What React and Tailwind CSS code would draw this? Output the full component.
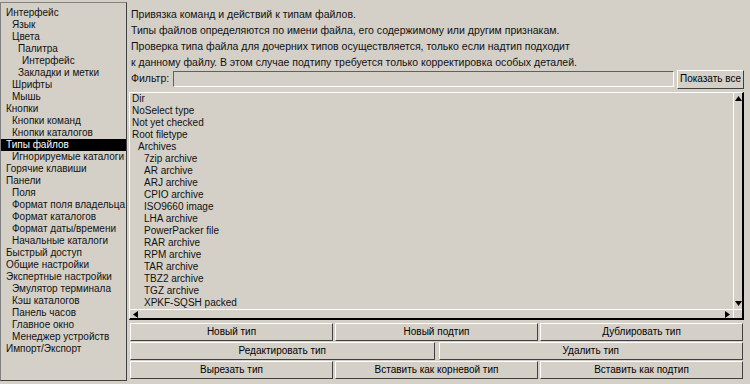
const tree = [
  ["Интерфейс", 0],
  ["Язык", 1],
  ["Цвета", 1],
  ["Палитра", 2],
  ["Интерфейс", 3],
  ["Закладки и метки", 2],
  ["Шрифты", 1],
  ["Мышь", 1],
  ["Кнопки", 0],
  ["Кнопки команд", 1],
  ["Кнопки каталогов", 1],
  ["Типы файлов", 0],
  ["Игнорируемые каталоги", 1],
  ["Горячие клавиши", 0],
  ["Панели", 0],
  ["Поля", 1],
  ["Формат поля владельца", 1],
  ["Формат каталогов", 1],
  ["Формат даты/времени", 1],
  ["Начальные каталоги", 1],
  ["Быстрый доступ", 0],
  ["Общие настройки", 0],
  ["Экспертные настройки", 0],
  ["Эмулятор терминала", 1],
  ["Кэш каталогов", 1],
  ["Панель часов", 1],
  ["Главное окно", 1],
  ["Менеджер устройств", 1],
  ["Импорт/Экспорт", 0],
];

const types = [
  ["Dir", 0],
  ["NoSelect type", 0],
  ["Not yet checked", 0],
  ["Root filetype", 0],
  ["Archives", 1],
  ["7zip archive", 2],
  ["AR archive", 2],
  ["ARJ archive", 2],
  ["CPIO archive", 2],
  ["ISO9660 image", 2],
  ["LHA archive", 2],
  ["PowerPacker file", 2],
  ["RAR archive", 2],
  ["RPM archive", 2],
  ["TAR archive", 2],
  ["TBZ2 archive", 2],
  ["TGZ archive", 2],
  ["XPKF-SQSH packed", 2],
];

const treeIndent = ["pl-[5px]", "pl-[11px]", "pl-[17px]", "pl-[21px]"];
const typeIndent = ["pl-[2px]", "pl-[8px]", "pl-[14px]"];

function Button({ label, className = "" }) {
  return (
    <button
      className={`h-[18px] bg-[#d4d0c8] border-t border-l border-white border-r border-b border-r-[#404040] border-b-[#404040] text-[10px] leading-none text-black whitespace-nowrap ${className}`}
    >
      {label}
    </button>
  );
}

export default function App() {
  return (
    <div className="w-[750px] h-[384px] bg-[#d4d0c8] flex font-['Liberation_Sans',Arial,sans-serif] text-[10px] text-[#111] overflow-hidden">
      {/* Settings tree */}
      <div className="w-[127px] mt-[2px] h-[379px] border-l border-t border-r border-b border-l-[#808080] border-t-[#808080] border-r-[#404040] border-b-[#404040] pt-[4px]">
        {tree.map(([label, level], i) => (
          <div
            key={i}
            className={`h-[12px] leading-[12px] whitespace-nowrap ${treeIndent[level]} ${
              label === "Типы файлов" && level === 0 ? "bg-black text-white" : ""
            }`}
          >
            {label}
          </div>
        ))}
      </div>

      {/* File types page */}
      <div className="w-[616px] ml-[2px] flex flex-col">
        <div className="pt-[6px] pl-[2px] leading-[16px] text-[10.5px]">
          <p>Привязка команд и действий к типам файлов.</p>
          <p>Типы файлов определяются по имени файла, его содержимому или другим признакам.</p>
          <p>Проверка типа файла для дочерних типов осуществляется, только если надтип подходит</p>
          <p>к данному файлу. В этом случае подтипу требуется только корректировка особых деталей.</p>
        </div>

        <div className="flex items-center h-[20px] mt-[-1px]">
          <span className="pl-[2px] w-[44px] text-[10.5px]">Фильтр:</span>
          <div className="w-[501px] h-[16px] border-t border-l border-[#606060] border-r border-b border-r-white border-b-white" />
          <Button label="Показать все" className="ml-[3px] w-[67px] h-[19px]" />
        </div>

        {/* Type list */}
        <div className="mt-[3px] w-[615px] h-[228px] border-t border-l border-white border-r-2 border-b-2 border-r-black border-b-black flex flex-col">
          <div className="flex flex-1 min-h-0">
            <div className="flex-1 overflow-hidden">
              {types.map(([label, level], i) => (
                <div key={i} className={`h-[12px] leading-[12px] whitespace-nowrap ${typeIndent[level]}`}>
                  {label}
                </div>
              ))}
            </div>
            <div className="w-[9px] border-l border-white flex flex-col justify-between items-center py-[3px]">
              <svg width="7" height="5" viewBox="0 0 7 5"><path d="M3.5 0 L7 5 L0 5 Z" fill="#000" /></svg>
              <svg width="7" height="5" viewBox="0 0 7 5"><path d="M0 0 L7 0 L3.5 5 Z" fill="#000" /></svg>
            </div>
          </div>
          <div className="h-[9px] border-t border-white flex">
            <div className="flex-1 flex items-center justify-between px-[3px]">
              <svg width="5" height="7" viewBox="0 0 5 7"><path d="M0 3.5 L5 0 L5 7 Z" fill="#000" /></svg>
              <svg width="5" height="7" viewBox="0 0 5 7"><path d="M0 0 L5 3.5 L0 7 Z" fill="#000" /></svg>
            </div>
            <div className="w-[9px] border-l border-white" />
          </div>
        </div>

        {/* Action buttons */}
        <div className="mt-[3px] flex flex-col gap-[1px] w-[614px] pl-[1px]">
          <div className="flex gap-[2px]">
            <Button label="Новый тип" className="flex-1" />
            <Button label="Новый подтип" className="flex-1" />
            <Button label="Дублировать тип" className="flex-1" />
          </div>
          <div className="flex gap-[4px]">
            <Button label="Редактировать тип" className="flex-1" />
            <Button label="Удалить тип" className="flex-1" />
          </div>
          <div className="flex gap-[2px]">
            <Button label="Вырезать тип" className="flex-1" />
            <Button label="Вставить как корневой тип" className="flex-1" />
            <Button label="Вставить как подтип" className="flex-1" />
          </div>
        </div>
      </div>
    </div>
  );
}
